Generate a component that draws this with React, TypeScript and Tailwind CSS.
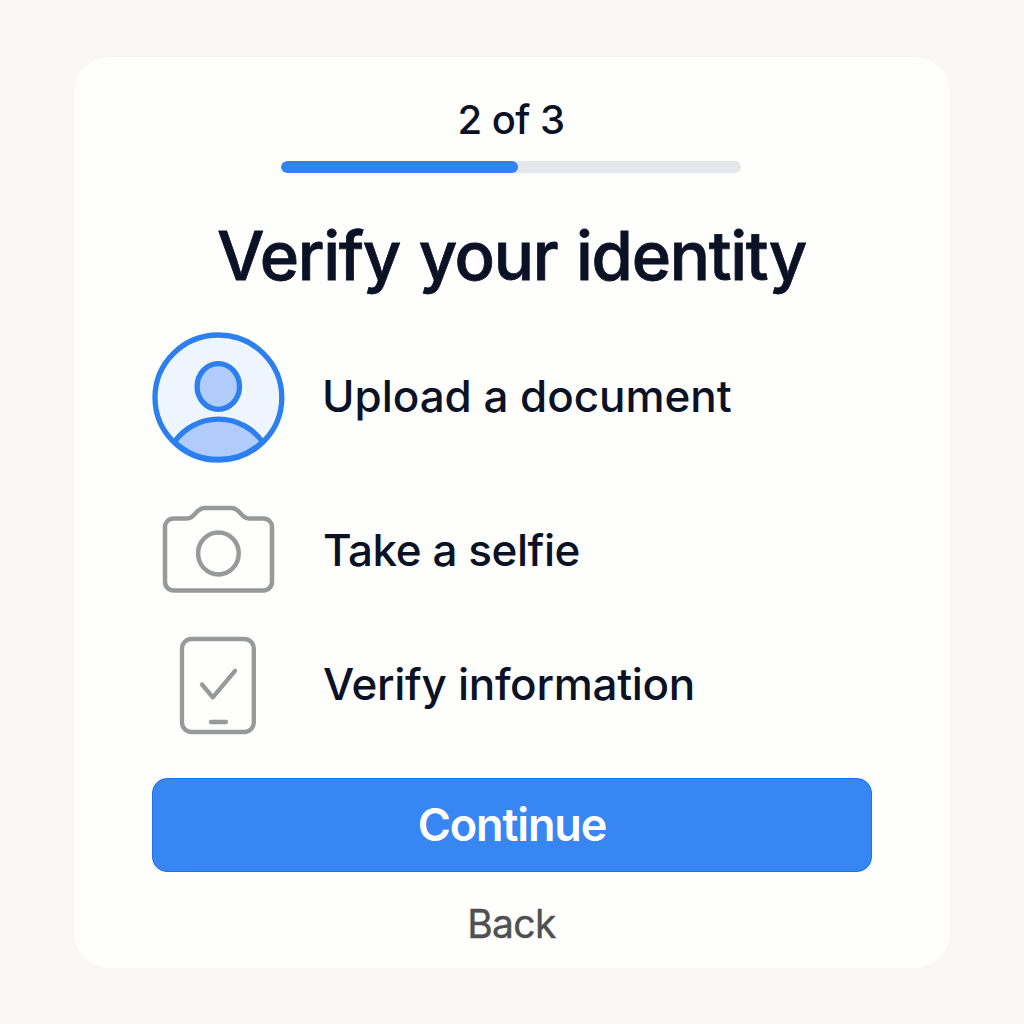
import type { ReactNode } from "react";

function PersonIcon() {
  return (
    <svg width="134" height="132" viewBox="0 0 134 132" fill="none" stroke="#2b7fee" strokeWidth="5.3">
      <ellipse cx="66.4" cy="65.6" rx="63.4" ry="62.6" fill="#eff5fe" />
      <path d="M22.5 109.8a54 54 0 0 1 88 0A63.4 62.6 0 0 1 22.5 109.8Z" fill="#b1ccfb" />
      <ellipse cx="66.3" cy="54.5" rx="21.2" ry="22.8" fill="#b1ccfb" />
    </svg>
  );
}

function CameraIcon() {
  return (
    <svg width="114" height="91" viewBox="0 0 114 91" fill="none" stroke="#98999b" strokeWidth="4.5" strokeLinejoin="round">
      <path d="M11.5 14.5H25C34 14.5 33 4 43 4H69C79 4 78 14.5 87 14.5H101.5a8.5 8.5 0 0 1 8.5 8.5V78a8.5 8.5 0 0 1-8.5 8.5H11.5a8.5 8.5 0 0 1-8.5-8.5V23a8.5 8.5 0 0 1 8.5-8.5Z" />
      <ellipse cx="56.4" cy="49.4" rx="20.3" ry="21" />
    </svg>
  );
}

function DeviceCheckIcon() {
  return (
    <svg width="82" height="101" viewBox="0 0 82 101" fill="none" stroke="#98999b" strokeWidth="4.3" strokeLinecap="round" strokeLinejoin="round">
      <rect x="4" y="4" width="71.8" height="93" rx="9.5" />
      <path d="M24 49.5 34.8 62.3 57 35.8" />
      <path d="M33 87H48" />
    </svg>
  );
}

function Step({ icon, children }: { icon: ReactNode; children: ReactNode }) {
  return (
    <li className="flex items-center">
      <span className="flex w-[134px] shrink-0 justify-center">{icon}</span>
      {children}
    </li>
  );
}

export default function App() {
  return (
    <main className="flex h-screen justify-center overflow-hidden bg-[#faf8f5] pt-[57px] font-['Inter',sans-serif] text-[#0b1226]">
      <section className="flex h-[911px] w-[876px] flex-col items-center rounded-[36px] bg-[#fefefd] px-[78px] pt-[43px]">
        <p className="mr-0.5 text-[40px] leading-[40px] font-medium tracking-[-0.6px]">2 of 3</p>
        <div className="mt-[21px] mr-0.5 h-3 w-[460px] overflow-hidden rounded-full bg-[#e5e7ea]">
          <div className="h-full w-[237px] rounded-full bg-[#3182f3]" />
        </div>

        <h1 className="mt-[49px] mr-px text-[67px] leading-[68px] font-medium tracking-[-1.3px] whitespace-nowrap [-webkit-text-stroke:0.8px_#0b1226] [word-spacing:2px]">
          Verify your identity
        </h1>

        <ul className="mt-[42px] flex w-full flex-col gap-10 text-[44px] leading-[48px] font-medium whitespace-nowrap">
          <Step icon={<PersonIcon />}>
            <span className="pb-1 pl-[36px] tracking-[-0.05px]">Upload a document</span>
          </Step>
          <Step icon={<CameraIcon />}>
            <span className="pl-[37px] tracking-[-0.45px]">Take a selfie</span>
          </Step>
          <Step icon={<DeviceCheckIcon />}>
            <span className="pb-[4px] pl-[37px] tracking-[-0.3px]">Verify information</span>
          </Step>
        </ul>

        <button className="mt-[42px] h-[94px] w-full shrink-0 rounded-[15px] border border-[#1d73e8] bg-[#3886f3] text-[45px] leading-[48px] font-semibold tracking-[-1.1px] text-white">
          Continue
        </button>
        <button className="mt-8 mr-px text-[39px] leading-[40px] tracking-[-0.6px] text-[#4f5052] [-webkit-text-stroke:0.4px_#4f5052]">
          Back
        </button>
      </section>
    </main>
  );
}
